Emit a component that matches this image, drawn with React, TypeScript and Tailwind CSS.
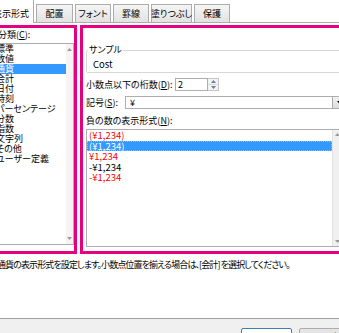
import React from 'react'

const categories = ['標準', '数値', '通貨', '会計', '日付', '時刻', 'パーセンテージ', '分数', '指数', '文字列', 'その他', 'ユーザー定義']

const negatives = [
  { text: '(¥1,234)', red: true, selected: false },
  { text: '(¥1,234)', red: false, selected: true },
  { text: '¥1,234', red: true, selected: false },
  { text: '-¥1,234', red: false, selected: false },
  { text: '-¥1,234', red: true, selected: false },
]

const tabs = [
  { label: '配置', w: 'w-[37px]' },
  { label: 'フォント', w: 'w-[36px]' },
  { label: '罫線', w: 'w-[36px]' },
  { label: '塗りつぶし', w: 'w-[41px]' },
  { label: '保護', w: 'w-[36px]' },
]

function Tri({ up, color = '#9a9a9a' }: { up?: boolean; color?: string }) {
  return (
    <svg width="5" height="3" viewBox="0 0 5 3">
      <path d={up ? 'M0 3 L2.5 0 L5 3 Z' : 'M0 0 L5 0 L2.5 3 Z'} fill={color} />
    </svg>
  )
}

export default function App() {
  return (
    <div className="w-[339px] h-[333px] overflow-hidden bg-white flex flex-col text-[9px] leading-[10px] text-black font-['Noto_Sans_CJK_JP',sans-serif] [font-feature-settings:'palt']">

      {/* tab strip */}
      <div className="flex items-end gap-[2px] h-[23px] shrink-0 border-b border-[#acacac] -ml-[12px]">
        <div className="relative z-10 -mb-px h-[24px] w-[46px] bg-white border border-b-0 border-[#acacac] flex justify-center pt-[9px]">
          表示形式
        </div>
        {tabs.map(t => (
          <div key={t.label} className={`${t.w} h-[18px] bg-linear-to-b from-[#f5f5f5] to-[#e2e2e2] border border-b-0 border-[#acacac] flex items-center justify-center whitespace-nowrap`}>
            {t.label}
          </div>
        ))}
      </div>

      {/* panels */}
      <div className="flex gap-[3px] -ml-[12px] mt-[2px] shrink-0">
        <div className="w-[89px] h-[229px] shrink-0 border-[3px] border-[#e4007f] flex flex-col">
          <div className="h-[14px] leading-[14px] pl-[7px] whitespace-nowrap">
            分類(<span className="underline">C</span>):
          </div>
          <div className="mt-[1px] h-[202px] border border-[#abadb3] flex">
            <div className="flex-1 flex flex-col">
              {categories.map(c => (
                <div key={c} className={`h-[10px] leading-[10px] pl-[4px] whitespace-nowrap ${c === '通貨' ? 'bg-[#3399ff] text-white' : ''}`}>
                  {c}
                </div>
              ))}
            </div>
            <div className="w-[7px] bg-[#f4f4f4] flex flex-col justify-between items-center py-[4px]">
              <Tri up />
              <Tri />
            </div>
          </div>
        </div>

        <div className="w-[270px] h-[229px] shrink-0 border-[3px] border-[#e4007f] pl-[3px] pr-[1px] flex flex-col">
          <fieldset className="mt-[17px] border border-[#d8d8d8] rounded-[2px] pl-[6px] pb-[3px]">
            <legend className="-ml-[5px] px-[1px] leading-[10px]">サンプル</legend>
            <div className="mt-[4px] leading-[10px] text-[9.5px]">Cost</div>
          </fieldset>

          <div className="mt-[5px] h-[13px] flex items-center">
            <div className="w-[89px] whitespace-nowrap">小数点以下の桁数(<span className="underline">D</span>):</div>
            <div className="w-[33px] h-[13px] border border-[#abadb3] pl-[2px] flex items-center">2</div>
            <div className="w-[11px] h-[13px] border border-l-0 border-[#c5c5c5] flex flex-col">
              <div className="flex-1 flex items-center justify-center bg-[#f3f3f3] border-b border-[#d8d8d8]">
                <Tri up color="#6a7f9e" />
              </div>
              <div className="flex-1 flex items-center justify-center bg-[#f3f3f3]">
                <Tri color="#6a7f9e" />
              </div>
            </div>
          </div>

          <div className="mt-[5px] h-[13px] flex items-center">
            <div className="w-[39px] whitespace-nowrap">記号(<span className="underline">S</span>):</div>
            <div className="flex-1 h-[13px] border border-[#abadb3] flex items-center">
              <span className="pl-[4px]">¥</span>
              <div className="ml-auto w-[13px] h-full bg-linear-to-b from-[#f4f4f4] to-[#dcdcdc] border-l border-[#acacac] flex items-center justify-center">
                <Tri color="#000000" />
              </div>
            </div>
          </div>

          <div className="mt-[7px] leading-[10px] whitespace-nowrap">
            負の数の表示形式(<span className="underline">N</span>):
          </div>
          <div className="mt-[3px] h-[118px] border border-[#abadb3] flex">
            <div className="flex-1 flex flex-col">
              {negatives.map((n, i) => (
                <div
                  key={i}
                  className={`h-[10.5px] leading-[10.5px] pl-[2px] text-[9.5px] whitespace-nowrap ${n.selected ? 'bg-[#3399ff] text-white outline-1 outline-dotted outline-[#d9b56a] -outline-offset-1' : n.red ? 'text-[#ff0000]' : ''}`}
                >
                  {n.text}
                </div>
              ))}
            </div>
            <div className="w-[13px] bg-[#f0f0f0] border-l border-[#e2e2e2] flex flex-col justify-between pl-[2px] py-[3px]">
              <Tri up />
              <Tri />
            </div>
          </div>
        </div>
      </div>

      {/* description */}
      <div className="mt-[6px] -ml-[12px] pl-[9px] leading-[10px] tracking-[-0.9px] whitespace-nowrap shrink-0">
        通貨の表示形式を設定します。小数点位置を揃える場合は、[会計] を選択してください。
      </div>

      {/* footer */}
      <div className="mt-auto h-[15px] shrink-0 border-t border-[#a0a0a0] bg-[#f0f0f0] flex items-start pt-[9px]">
        <div className="ml-[241px] w-[51px] h-[22px] shrink-0 border border-[#3c7fb1] bg-white rounded-[2px] flex justify-center pt-[3px]">OK</div>
        <div className="ml-[7px] w-[60px] h-[22px] shrink-0 border border-[#acacac] bg-[#e5e5e5] rounded-[2px] flex justify-center pt-[3px] whitespace-nowrap">キャンセル</div>
      </div>
    </div>
  )
}
